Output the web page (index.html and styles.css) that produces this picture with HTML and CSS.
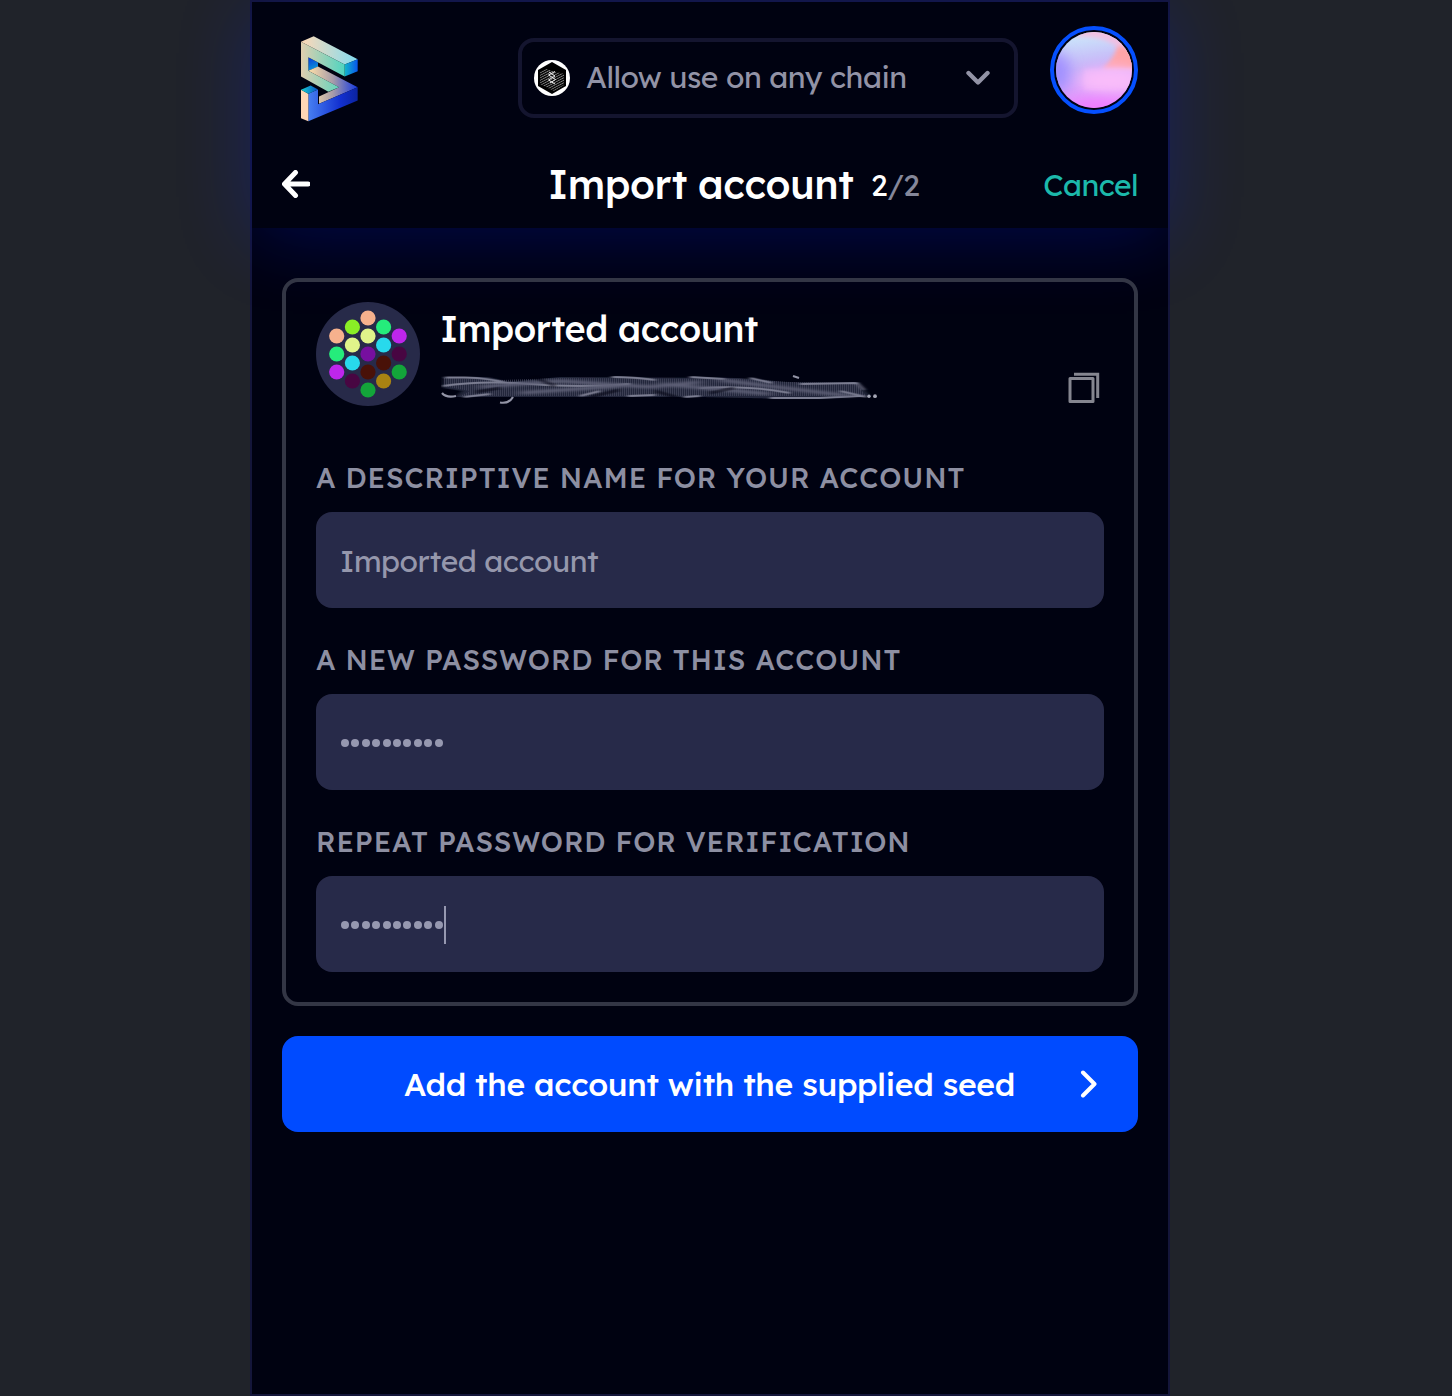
FILE: index.html
```html
<!DOCTYPE html>
<html lang="en">
<head>
<meta charset="utf-8">
<title>Import account</title>
<link rel="stylesheet" href="styles.css">
</head>
<body>
<main class="panel">
  <header class="header">
    <div class="topbar">
      <svg class="logo" viewBox="64 47 171 257" aria-label="Logo">
        <defs>
          <linearGradient id="top"><stop offset="0" stop-color="#ffd8b5"/><stop offset="1" stop-color="#82dcf0"/></linearGradient>
          <linearGradient id="front"><stop offset="0" stop-color="#e1ceb0"/><stop offset="1" stop-color="#4fd5c0"/></linearGradient>
          <linearGradient id="end"><stop offset="0" stop-color="#13b5ca"/><stop offset="1" stop-color="#0756ed"/></linearGradient>
          <linearGradient id="inner" x1="0" y1="0" x2="0.3" y2="1"><stop offset="0" stop-color="#0637dc"/><stop offset="1" stop-color="#0a94d7"/></linearGradient>
          <linearGradient id="mid" gradientUnits="userSpaceOnUse" x1="86" y1="0" x2="234" y2="0"><stop offset="0" stop-color="#ffe0a8"/><stop offset=".5" stop-color="#a79ba9"/><stop offset="1" stop-color="#1438e0"/></linearGradient>
          <linearGradient id="base"><stop offset="0" stop-color="#477ff2"/><stop offset=".65" stop-color="#1230d0"/><stop offset="1" stop-color="#0b23a0"/></linearGradient>
          <linearGradient id="cap"><stop offset="0" stop-color="#18d0cd"/><stop offset="1" stop-color="#0752c9"/></linearGradient>
        </defs>
        <path fill="url(#top)" d="M64 64L102 47L234 116L195 132Z"/>
        <path fill="url(#end)" d="M195 132L234 116V152L195 168Z"/>
        <path fill="url(#inner)" d="M86 110L115 126V139L86 151Z"/>
        <path fill="url(#mid)" d="M86 151L115 138L234 200L118 250V228L178 200Z"/>
        <path fill="url(#front)" d="M64 64L195 132V168L86 110V151L178 200L146 214L64 168Z"/>
        <path fill="url(#base)" d="M234 200V240L86 302V220L115 207V251Z"/>
        <path fill="#ffd6b5" d="M64 208L86 220V302L64 293Z"/>
        <path fill="url(#cap)" d="M64 208L93 195L115 207L86 220Z"/>
      </svg>
      <div class="chain">
        <svg class="chain-icon" viewBox="0 0 36 36">
          <defs><pattern id="lines" width="3" height="2.2" patternUnits="userSpaceOnUse" patternTransform="rotate(-28)"><path d="M0 1H3" stroke="#b5b5b5" stroke-width=".7"/></pattern></defs>
          <circle cx="18" cy="18" r="18" fill="#fff"/>
          <path d="M18 2L32 10V26L18 34L4 26V10Z" fill="#000"/>
          <path d="M6 12L12 9L30 14V25L20 31L6 24Z" fill="url(#lines)"/>
          <path d="M21 11.500L14.500 15L21.500 19.500L16 23M15 12L21 16L14.500 20L21 24" fill="none" stroke="#eee" stroke-width="1"/>
        </svg>
        <span class="chain-text">Allow use on any chain</span>
        <svg class="chevron" viewBox="0 0 24 16"><path d="M2.500 3L12 12.500L21.500 3" fill="none" stroke="#9293a6" stroke-width="4.400" stroke-linecap="round" stroke-linejoin="round"/></svg>
      </div>
      <div class="avatar">
        <svg viewBox="0 0 76 76">
          <defs>
            <clipPath id="round"><circle cx="38" cy="38" r="38"/></clipPath>
            <linearGradient id="sky" x1=".45" y1="0" x2=".6" y2="1"><stop offset="0" stop-color="#cbe9fb"/><stop offset=".45" stop-color="#c6b2f8"/><stop offset="1" stop-color="#ef8cff"/></linearGradient>
            <filter id="soft" x="-50%" y="-100%" width="200%" height="300%"><feGaussianBlur stdDeviation="7"/></filter>
            <filter id="softer" x="-50%" y="-50%" width="200%" height="200%"><feGaussianBlur stdDeviation="2"/></filter>
          </defs>
          <g clip-path="url(#round)">
            <rect width="76" height="76" fill="url(#sky)"/>
            <ellipse cx="0" cy="40" rx="14" ry="20" fill="#a090ff" filter="url(#soft)"/>
            <path d="M25 -5H85V38H46Q64 30 61 15Q46 3 20 5Z" fill="#f0c0e2" filter="url(#softer)"/>
            <path d="M46 37Q58 27 62 14L85 18V37Z" fill="#ffa4a7" filter="url(#softer)"/>
            <path d="M28 37H90V58H28Z" fill="#fabdfa" filter="url(#softer)" opacity=".45"/>
            <ellipse cx="54" cy="48" rx="32" ry="12" fill="#fabdfa" filter="url(#soft)"/>
            <ellipse cx="40" cy="78" rx="26" ry="9" fill="#ee7aff" filter="url(#soft)"/>
          </g>
        </svg>
      </div>
    </div>
    <div class="titlebar">
      <svg class="back" viewBox="0 0 28 28"><path d="M26 14H3M13.500 2.500L2.500 14L13.500 25.500" fill="none" stroke="#fff" stroke-width="5" stroke-linejoin="round" stroke-linecap="round"/></svg>
      <h1 class="title">Import account</h1>
      <span class="step"><span class="current">2</span>/2</span>
      <a class="cancel">Cancel</a>
    </div>
  </header>
  <section class="card">
    <div class="account">
      <svg class="identicon" viewBox="316 302 104 104">
        <circle cx="368" cy="354" r="52" fill="#272a49"/>
        <g fill="#f6b18d"><circle cx="368" cy="318" r="7.600"/><circle cx="336.700" cy="336" r="7.600"/></g>
        <circle cx="352.400" cy="327" r="7.600" fill="#8aee26"/>
        <g fill="#25ec7b"><circle cx="383.600" cy="327" r="7.600"/><circle cx="336.700" cy="354" r="7.600"/></g>
        <g fill="#e0f48a"><circle cx="368" cy="336" r="7.600"/><circle cx="352.400" cy="345" r="7.600"/></g>
        <g fill="#be26eb"><circle cx="399.200" cy="336" r="7.600"/><circle cx="336.700" cy="372" r="7.600"/></g>
        <g fill="#28d9ec"><circle cx="383.600" cy="345" r="7.600"/><circle cx="352.400" cy="363" r="7.600"/></g>
        <circle cx="368" cy="354" r="7.600" fill="#760f9f"/>
        <g fill="#480642"><circle cx="399.200" cy="354" r="7.600"/><circle cx="352.400" cy="381" r="7.600"/></g>
        <g fill="#491108"><circle cx="383.600" cy="363" r="7.600"/><circle cx="368" cy="372" r="7.600"/></g>
        <g fill="#13a53a"><circle cx="399.200" cy="372" r="7.600"/><circle cx="368" cy="390" r="7.600"/></g>
        <circle cx="383.600" cy="381" r="7.600" fill="#a98312"/>
      </svg>
      <div class="details">
        <div class="name">Imported account</div>
        <div class="address">
          <svg class="smudge" viewBox="441 372 440 36" aria-label="Address hidden">
            <defs>
              <pattern id="comb" width="2" height="4" patternUnits="userSpaceOnUse"><path d="M0 0H1V4H0Z" fill="#4a4c62"/></pattern>
              <filter id="blur1" x="-5%" y="-50%" width="110%" height="200%"><feGaussianBlur stdDeviation="2.200 .6"/></filter>
              <filter id="blur2" x="-5%" y="-50%" width="110%" height="200%"><feGaussianBlur stdDeviation="6 1"/></filter>
            </defs>
            <path d="M444 377H488L510 382L560 377L740 378L785 382L858 383L870 396L790 399L700 397H455L462 391L443 388Z" fill="#24273a" filter="url(#blur1)"/>
            <path d="M444 378L500 380L560 378L740 379L790 382L856 383L866 396H460L470 391L443 386Z" fill="url(#comb)" opacity=".65"/>
            <g fill="none" stroke="#7c7e92" stroke-width="2" filter="url(#blur1)">
              <path d="M445 377.500H465Q490 378 510 384M443 386Q480 380 530 384T630 384M464 397L490 394M580 396L600 391M612 377Q635 377 655 380M690 377L725 379M750 378L772 383M800 384L857 383L864 390M628 396L655 395M684 397L700 396M700 388Q750 385 790 393M770 398H820L860 396M840 391L866 397"/>
            </g>
            <path d="M442 393Q446 398 456 396M500 402.500Q509 404 513 397M793 376L799 378" fill="none" stroke="#9294a6" stroke-width="2.200"/>
            <g fill="none" stroke="#5f6177" stroke-width="3" filter="url(#blur2)"><path d="M480 387L560 381L650 387L700 382M520 393L620 386M660 384L770 394M720 380L850 396"/></g>
            <path d="M534 377L555 386M590 397L619 390M655 391L676 397M710 393L734 388M476 392L500 388" stroke="#000211" stroke-width="3" opacity=".5" filter="url(#blur1)"/>
            <g fill="#a4a6b5"><circle cx="869" cy="396.200" r="1.700"/><circle cx="875" cy="396.200" r="1.900"/></g>
          </svg>
          <svg class="copy" viewBox="0 0 32 32"><g fill="none" stroke="#858690" stroke-width="3"><path d="M2 6.500H25V29.500H2Z" stroke-linejoin="round"/><path d="M6 2.200H29.700V26"/></g></svg>
        </div>
      </div>
    </div>
    <label class="label label-name">A descriptive name for your account</label>
    <div class="field"><span class="field-text">Imported account</span></div>
    <label class="label label-new">A new password for this account</label>
    <div class="field"><span class="dots"><i></i><i></i><i></i><i></i><i></i><i></i><i></i><i></i><i></i><i></i></span></div>
    <label class="label label-repeat">Repeat password for verification</label>
    <div class="field"><span class="dots"><i></i><i></i><i></i><i></i><i></i><i></i><i></i><i></i><i></i><i></i></span><span class="caret"></span></div>
  </section>
  <button class="submit"><span class="submit-text">Add the account with the supplied seed</span>
    <svg class="next" viewBox="0 0 18 28"><path d="M3 2.500L14.500 14L3 25.500" fill="none" stroke="#fff" stroke-width="4" stroke-linecap="round" stroke-linejoin="round"/></svg>
  </button>
</main>
</body>
</html>
```
FILE: styles.css
```css
* { box-sizing: border-box; }
body {
  margin: 0;
  height: 1396px;
  overflow: hidden;
  background: #20232a;
  font-family: Lexend, Inter, "Open Sans", sans-serif;
  font-feature-settings: "cv08" 1, "cv11" 1;
  color: #fff;
  white-space: nowrap;
}
.panel {
  width: 920px;
  height: 1396px;
  margin-left: 250px;
  border: 2px solid #14163a;
  background: #000211;
}
.header {
  height: 226px;
  background: #000211;
  box-shadow: 0 10px 70px rgba(0, 32, 255, .24);
}
.topbar {
  display: flex;
  align-items: flex-start;
  height: 140px;
  padding: 24px 30px 0 49px;
}
.logo { width: 57px; height: 86px; margin-top: 10px; }
.chain {
  display: flex;
  align-items: center;
  width: 500px;
  height: 80px;
  margin: 12px 32px 0 160px;
  padding: 0 24px 0 12px;
  border: 4px solid #14152f;
  border-radius: 16px;
  color: #9293a6;
  font-size: 30px;
}
.chain-icon { width: 36px; height: 36px; margin-right: 16px; }
.chain-text { padding-bottom: 2px; letter-spacing: -.46px; }
.chevron { width: 24px; height: 16px; margin-left: auto; }
.avatar {
  width: 88px;
  height: 88px;
  padding: 2px;
  border: 4px solid #0550ff;
  border-radius: 50%;
}
.avatar svg { display: block; width: 76px; height: 76px; }
.titlebar {
  display: grid;
  grid-template-columns: 28px 238px 323px 1fr auto;
  align-items: center;
  height: 84px;
  padding: 0 30px;
}
.back { width: 28px; height: 28px; }
.title {
  grid-column: 3;
  margin: 0;
  font-size: 40px;
  line-height: 50px;
  font-weight: 500;
  letter-spacing: -.45px;
}
.step { color: #85879a; font-size: 30px; padding-top: 1px; }
.current { color: #fff; }
.cancel { color: #1cb9ab; font-size: 30px; padding-top: 1px; letter-spacing: -.6px; }
.card {
  width: 856px;
  height: 728px;
  margin: 50px 30px 30px;
  padding: 20px 30px 0;
  border: 4px solid #333645;
  border-radius: 16px;
}
.account { display: flex; gap: 21px; height: 104px; }
.identicon { width: 104px; height: 104px; }
.details { flex: 1; }
.name {
  height: 54px;
  margin-left: -1px;
  font-size: 36px;
  line-height: 54px;
  font-weight: 500;
  letter-spacing: -.42px;
}
.address {
  display: flex;
  justify-content: space-between;
  padding: 16px 4px 0 0;
}
.smudge { width: 440px; height: 36px; }
.copy { width: 32px; height: 32px; }
.label {
  display: block;
  height: 42px;
  margin: 51px 0 13px;
  line-height: 42px;
  font-size: 28px;
  font-weight: 500;
  letter-spacing: .87px;
  text-transform: uppercase;
  color: #8d8fa2;
}
.field + .label { margin-top: 31px; }
.field {
  display: flex;
  align-items: center;
  height: 96px;
  padding: 2px 24px 0;
  border-radius: 16px;
  background: #272a49;
  color: #9597ac;
  font-size: 30px;
}
.field-text { letter-spacing: -.46px; }
.dots { display: flex; gap: 2.42px; margin-left: 1px; }
.dots i { width: 8px; height: 8px; border-radius: 50%; background: #9698b0; }
.caret { width: 2px; height: 38px; margin-left: 1px; background: #9698b0; }
.submit {
  display: flex;
  align-items: center;
  justify-content: space-between;
  width: 856px;
  height: 96px;
  margin: 0 30px;
  padding: 0 40px 0 122px;
  border: 0;
  border-radius: 16px;
  background: #004bff;
  color: #fff;
  font: inherit;
  font-feature-settings: inherit;
  font-size: 32px;
  font-weight: 500;
}
.submit-text { letter-spacing: -.28px; }
.next { width: 18px; height: 28px; }
```
